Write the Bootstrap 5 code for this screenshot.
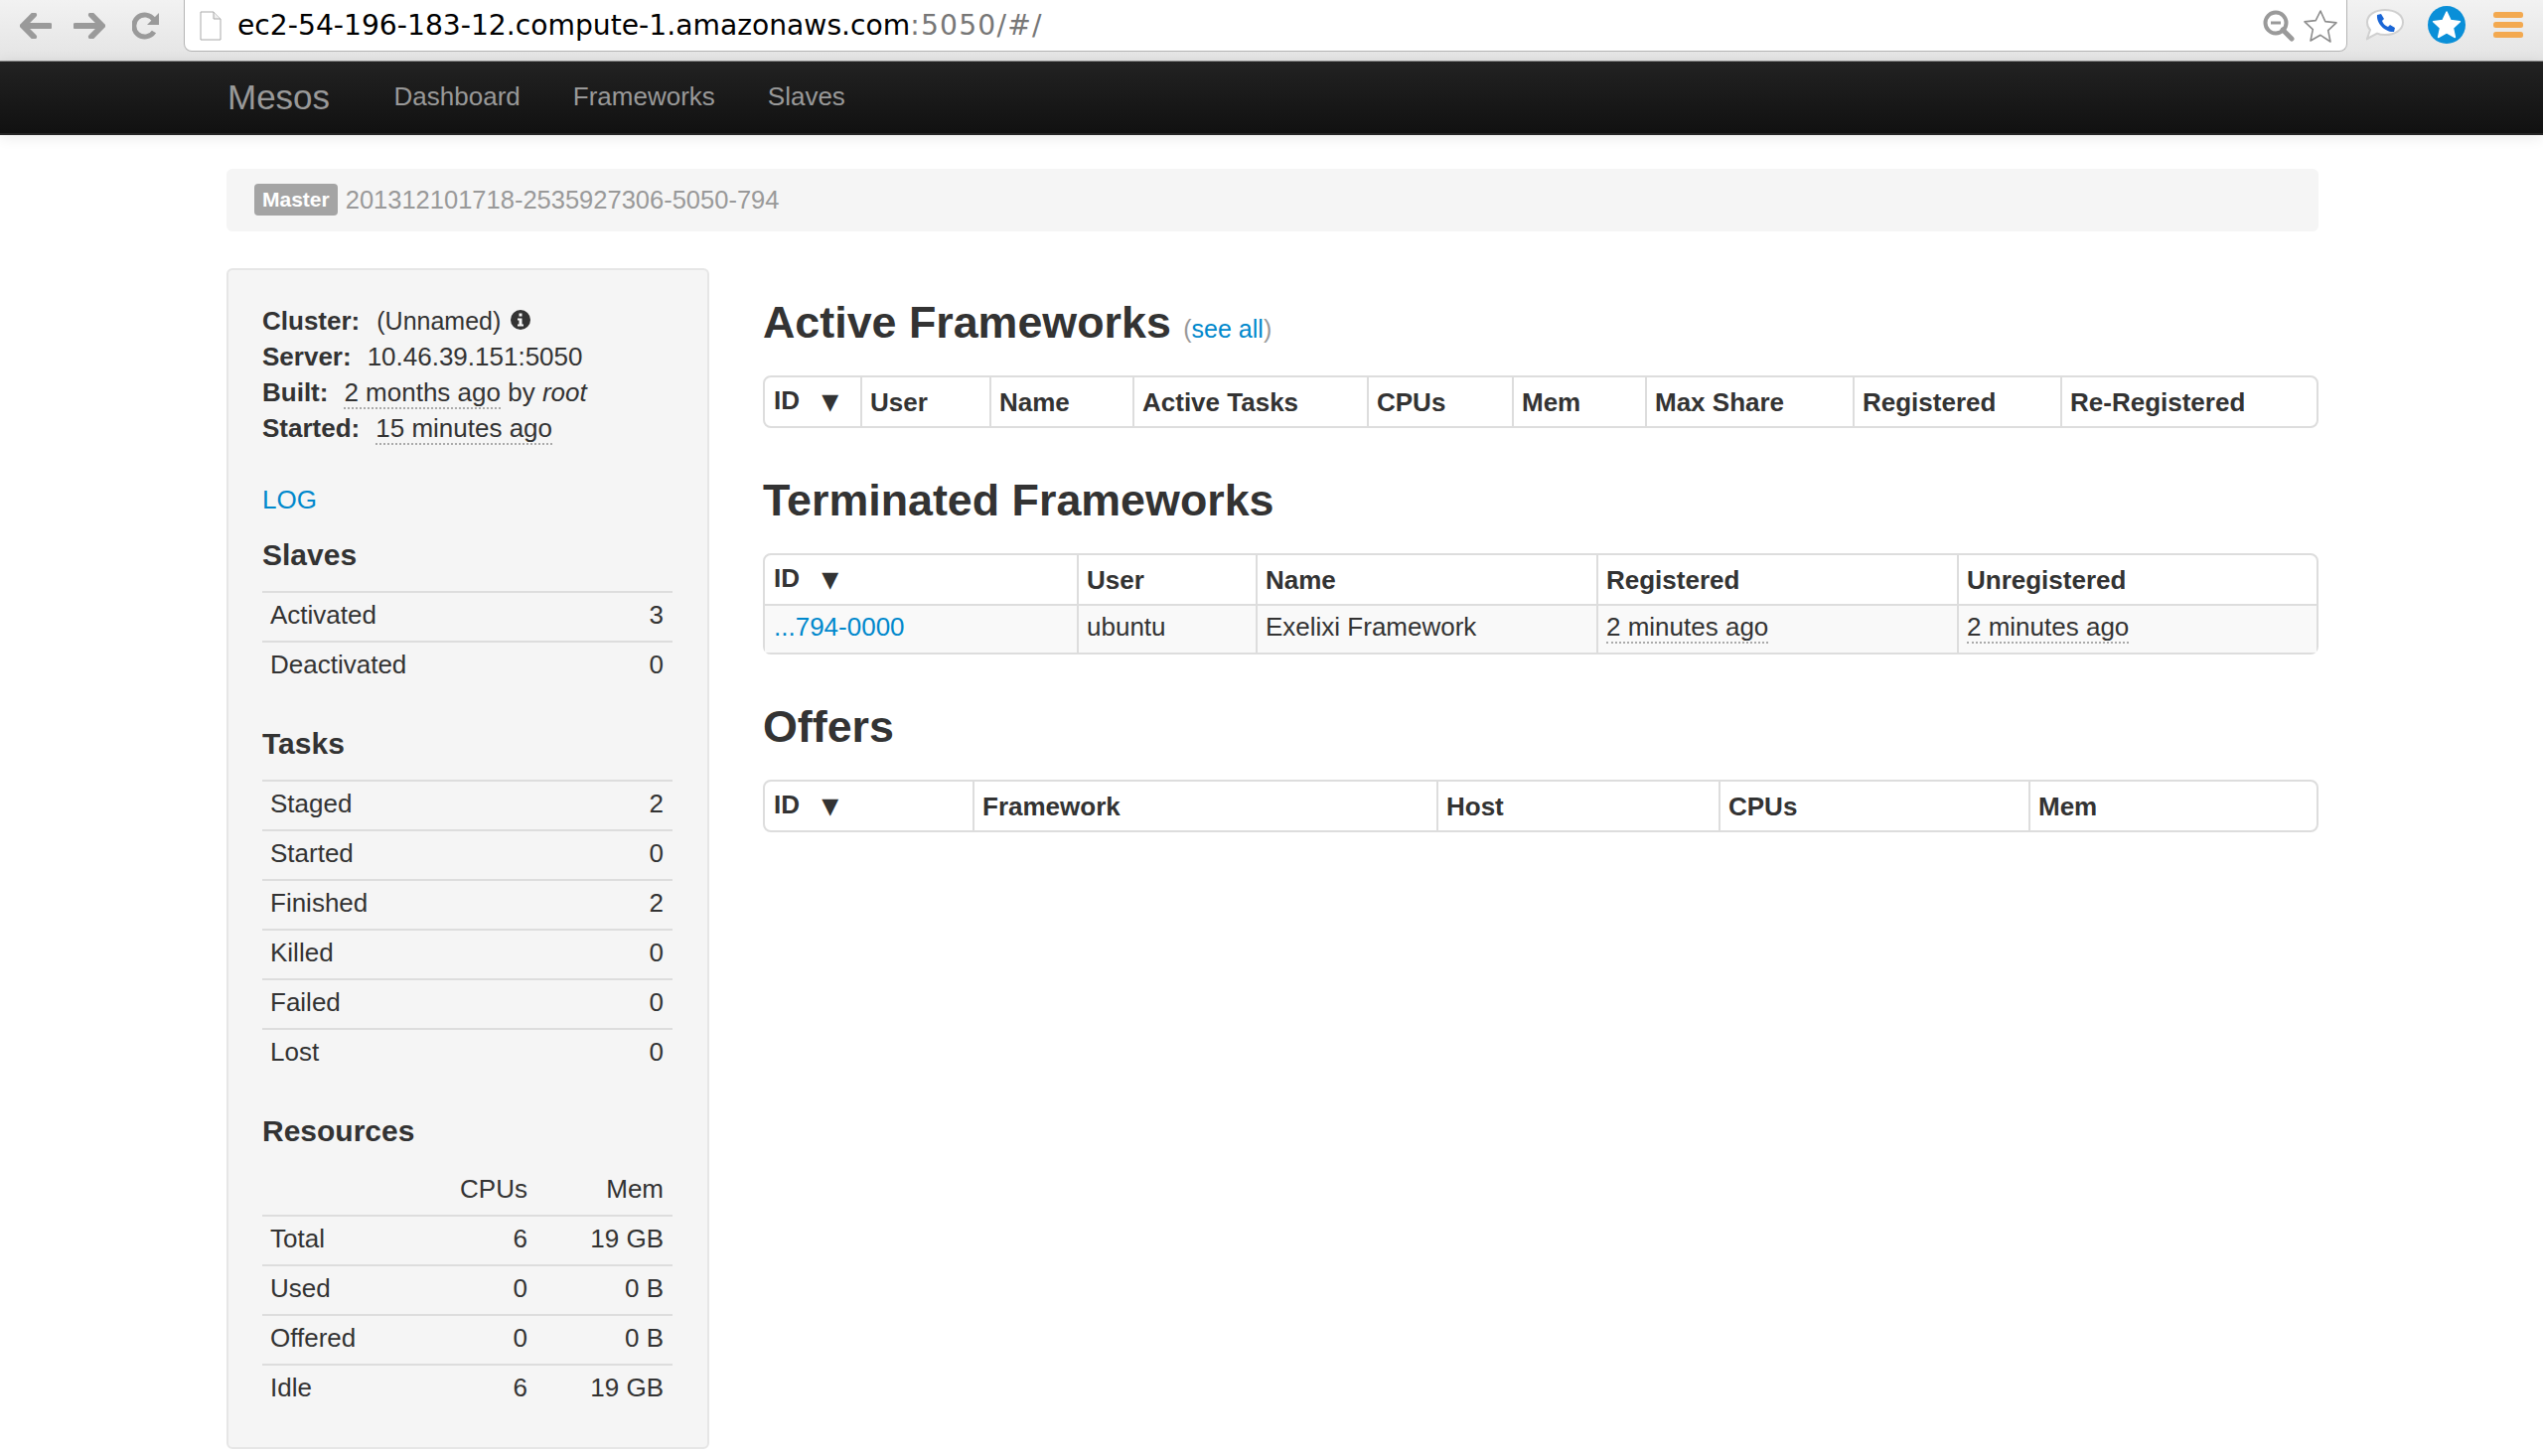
<!DOCTYPE html>
<html lang="en">
<head>
  <meta charset="UTF-8">
  <meta name="viewport" content="width=device-width, initial-scale=1">
  <title>Mesos</title>
  <link href="https://cdn.jsdelivr.net/npm/bootstrap@5.3.3/dist/css/bootstrap.min.css" rel="stylesheet">
  <style>
    html, body { height: 1466px; overflow: hidden; }
    body { font-family: "Liberation Sans", Arial, sans-serif; font-size: 26px; line-height: 36px; color: #333; background: #fff; }
    a { color: #0088cc; text-decoration: none; }

    /* browser chrome */
    .browser-bar { height: 62px; padding: 12px 0 0 20px; background: linear-gradient(#f2f2f2, #e4e4e4); border-bottom: 1px solid #8f8f8f; }
    .nav-arrows { width: 165px; gap: 22px; }
    .nav-arrows svg:last-child { margin-left: 5px; }
    .address-box { width: 2178px; height: 52px; margin-top: -12px; padding: 0 8px 0 15px; background: #fff; border: 1px solid #b4b4b4; border-top: 0; border-radius: 0 0 8px 8px; }
    .url-text { margin-left: 16px; font-family: "DejaVu Sans", sans-serif; font-size: 28.2px; line-height: 52px; color: #000; white-space: nowrap; }
    .url-text span { color: #777; letter-spacing: 1.2px; }
    .ext-icons { margin: -6px 0 0 19px; gap: 24px; }
    .ext-icons svg:last-child { margin-left: 4px; }

    /* dark bar */
    .top-bar { height: 74px; padding: 0 0 0 229px; background: linear-gradient(#222, #111); border-bottom: 2px solid #252525; box-shadow: 0 2px 14px rgba(0,0,0,.09); }
    .top-bar .navbar-brand { margin: 0 38px 0 0; padding: 0; font-size: 35px; font-weight: 400; line-height: 72px; color: #999; }
    .top-bar .navbar-nav { margin-top: -2px; }
    .top-bar .nav-link { padding: 0 26.5px; font-size: 26px; line-height: 69px; color: #999; }

    .page-wrap { padding: 34px 226px 0 228px; }
    .crumb-well { height: 63px; margin-bottom: 37px; padding: 0 28px 2px; background: #f5f5f5; border-radius: 6px; font-size: 25.5px; color: #999; }
    .crumb-tag { margin-right: 8px; padding: 0 8px; height: 32px; line-height: 32px; background: #a4a4a4; color: #fff; font-size: 21px; font-weight: 700; border-radius: 4px; }

    .side-well { width: 486px; height: 1189px; margin-right: 54px; padding: 33px 35px 0 34px; flex: none; background: #f5f5f5; border: 2px solid #e6e6e6; border-radius: 6px; }
    .info-line strong { margin-right: 16px; }
    .cluster-name { font-size: 25px; margin-left: 1px; margin-right: 2px; }
    .dotted { border-bottom: 2px dotted #aaa; }
    .log-link { margin: 36px 0 20px; }
    .side-title { margin: 0 0 18px; font-size: 30px; font-weight: 700; line-height: 36px; color: #333; }

    .stat-table { width: 100%; margin-bottom: 36px; table-layout: fixed; background: transparent; --bs-table-bg: transparent; --bs-table-color: #333; }
    .stat-table.table > :not(caption) > * > * { padding: 5px 9px 9px 8px; line-height: 34px; border-top: 2px solid #ddd; border-bottom: 0; font-weight: 400; }
    .stat-table.table > thead > tr > * { border-top: 0; }

    .main-col { min-width: 0; padding-top: 18px; }
    .main-title { margin: 0 0 18px; font-size: 44.8px; font-weight: 700; line-height: 72px; color: #333; }
    .main-title small { font-size: 25px; font-weight: 400; line-height: 1; color: #999; }
    .fw-table { margin-bottom: 36px; table-layout: fixed; border-collapse: separate; border-spacing: 0; border: 2px solid #ddd; border-radius: 8px; --bs-table-bg: transparent; --bs-table-color: #333; }
    .fw-table.table > :not(caption) > * > * { padding: 6px 8px 7px; line-height: 34px; border-width: 0 0 0 2px; border-style: solid; border-color: #ddd; white-space: nowrap; }
    .fw-table.table > :not(caption) > * > *:first-child { border-left: 0; padding-left: 9px; }
    .fw-table.table > tbody > tr > * { padding-top: 4px; padding-bottom: 9px; border-top: 2px solid #ddd; background: #f9f9f9; }
    .sort-arrow { margin-left: 15px; font-size: 22px; font-family: "DejaVu Sans", sans-serif; }
  </style>
</head>
<body>
  <!-- browser toolbar -->
  <div class="browser-bar d-flex align-items-start">
    <div class="nav-arrows d-flex align-items-center">
      <svg width="32" height="26" viewBox="0 0 32 26"><path d="M14 2 3 13l11 11M4 13h26" fill="none" stroke="#9a9a9a" stroke-width="6" stroke-linecap="round" stroke-linejoin="round"/></svg>
      <svg width="32" height="26" viewBox="0 0 32 26"><path d="M18 2l11 11-11 11M28 13H2" fill="none" stroke="#9a9a9a" stroke-width="6" stroke-linecap="round" stroke-linejoin="round"/></svg>
      <svg width="28" height="28" viewBox="0 0 28 28"><path d="M22 20a11 11 0 1 1 0-12" fill="none" stroke="#9a9a9a" stroke-width="5"/><path d="M27 1v12H15z" fill="#9a9a9a"/></svg>
    </div>
    <div class="address-box d-flex align-items-center">
      <svg width="22" height="30" viewBox="0 0 22 30"><path d="M1 1h13l7 7v21H1z" fill="#fff" stroke="#a8a8a8"/><path d="M14 1v7h7" fill="#eee" stroke="#a8a8a8"/></svg>
      <div class="url-text flex-grow-1">ec2-54-196-183-12.compute-1.amazonaws.com<span>:5050/#/</span></div>
      <svg class="me-2" width="32" height="32" viewBox="0 0 32 32"><circle cx="13" cy="13" r="10.5" fill="none" stroke="#9a9a9a" stroke-width="4"/><path d="M20 20l9 9" stroke="#9a9a9a" stroke-width="5" stroke-linecap="round"/><path d="M8 13h10" stroke="#9a9a9a" stroke-width="3"/></svg>
      <svg width="36" height="34" viewBox="0 0 36 34"><path d="M18 2l4.8 10.6 11.2 1.3-8.3 7.8 2.3 11.3L18 26.3 8 32l2.3-11.3L2 12.9l11.2-1.3z" fill="#fff" stroke="#8d8d8d" stroke-width="1.6" stroke-linejoin="round"/></svg>
    </div>
    <div class="ext-icons d-flex align-items-center">
      <svg width="38" height="32" viewBox="0 0 38 32"><path d="M19 1c10 0 18 5 18 12.500S29 26 19 26c-3 0-6-.4-8-1.400L1 30l3-9C2 19 1 16 1 13.500 1 6 9 1 19 1z" fill="#fff" stroke="#d0d0d0" stroke-width="2"/><path d="M11 6l4-1 3 5-2 2c1 3 3 5 6 6l2-2 5 3-1 4c-8 1-18-8-17-17z" fill="#1a66d6"/></svg>
      <svg width="38" height="38" viewBox="0 0 38 38"><circle cx="19" cy="19" r="19" fill="#0a8fd8"/><path d="M19 6l4 8.600 9.400 1.100-7 6.500 2 9.300-8.400-4.700-8.400 4.700 2-9.300-7-6.500 9.400-1.100z" fill="#fff" stroke="#fff" stroke-width="1.500" stroke-linejoin="round"/></svg>
      <svg width="30" height="26" viewBox="0 0 30 26"><rect width="30" height="6" y="0" rx="2.500" fill="#f3a950"/><rect width="30" height="6" y="10" rx="2.500" fill="#f3a950"/><rect width="30" height="6" y="20" rx="2.500" fill="#f3a950"/></svg>
    </div>
  </div>

  <!-- Navbar -->
  <nav class="navbar top-bar justify-content-start flex-nowrap">
    <a class="navbar-brand" href="#">Mesos</a>
    <ul class="navbar-nav flex-row">
      <li class="nav-item"><a class="nav-link" href="#">Dashboard</a></li>
      <li class="nav-item"><a class="nav-link" href="#">Frameworks</a></li>
      <li class="nav-item"><a class="nav-link" href="#">Slaves</a></li>
    </ul>
  </nav>

  <div class="page-wrap">
    <div class="crumb-well d-flex align-items-center">
      <span class="crumb-tag">Master</span>201312101718-2535927306-5050-794
    </div>

    <div class="d-flex">
      <!-- Sidebar -->
      <div class="side-well">
        <div class="info-line"><strong>Cluster:</strong><span class="cluster-name">(Unnamed)</span>
          <svg class="align-baseline" width="20" height="20" viewBox="0 0 20 20"><circle cx="10" cy="10" r="10" fill="#333"/><path d="M8.500 3.500h3v3h-3zM7 8.500h4.500v6H13v2H7v-2h1.500v-4H7z" fill="#f5f5f5"/></svg>
        </div>
        <div class="info-line"><strong>Server:</strong>10.46.39.151:5050</div>
        <div class="info-line"><strong>Built:</strong><span class="dotted">2 months ago</span> by <em>root</em></div>
        <div class="info-line"><strong>Started:</strong><span class="dotted">15 minutes ago</span></div>
        <div class="log-link"><a href="#">LOG</a></div>

        <h4 class="side-title">Slaves</h4>
        <table class="table stat-table">
          <tbody>
            <tr><td>Activated</td><td class="text-end">3</td></tr>
            <tr><td>Deactivated</td><td class="text-end">0</td></tr>
          </tbody>
        </table>

        <h4 class="side-title">Tasks</h4>
        <table class="table stat-table">
          <tbody>
            <tr><td>Staged</td><td class="text-end">2</td></tr>
            <tr><td>Started</td><td class="text-end">0</td></tr>
            <tr><td>Finished</td><td class="text-end">2</td></tr>
            <tr><td>Killed</td><td class="text-end">0</td></tr>
            <tr><td>Failed</td><td class="text-end">0</td></tr>
            <tr><td>Lost</td><td class="text-end">0</td></tr>
          </tbody>
        </table>

        <h4 class="side-title">Resources</h4>
        <table class="table stat-table mb-0">
          <colgroup><col width="136"><col width="140"><col></colgroup>
          <thead>
            <tr><th></th><th class="text-end">CPUs</th><th class="text-end">Mem</th></tr>
          </thead>
          <tbody>
            <tr><td>Total</td><td class="text-end">6</td><td class="text-end">19 GB</td></tr>
            <tr><td>Used</td><td class="text-end">0</td><td class="text-end">0 B</td></tr>
            <tr><td>Offered</td><td class="text-end">0</td><td class="text-end">0 B</td></tr>
            <tr><td>Idle</td><td class="text-end">6</td><td class="text-end">19 GB</td></tr>
          </tbody>
        </table>
      </div>

      <!-- Tables -->
      <div class="main-col flex-grow-1">
        <h3 class="main-title">Active Frameworks <small>(<a href="#">see all</a>)</small></h3>
        <table class="table fw-table">
          <colgroup><col width="96"><col width="130"><col width="144"><col width="236"><col width="146"><col width="134"><col width="209"><col width="209"><col></colgroup>
          <thead>
            <tr><th>ID <span class="sort-arrow">▼</span></th><th>User</th><th>Name</th><th>Active Tasks</th><th>CPUs</th><th>Mem</th><th>Max Share</th><th>Registered</th><th>Re-Registered</th></tr>
          </thead>
        </table>

        <h3 class="main-title">Terminated Frameworks</h3>
        <table class="table fw-table">
          <colgroup><col width="314"><col width="180"><col width="343"><col width="363"><col></colgroup>
          <thead>
            <tr><th>ID <span class="sort-arrow">▼</span></th><th>User</th><th>Name</th><th>Registered</th><th>Unregistered</th></tr>
          </thead>
          <tbody>
            <tr><td><a href="#">...794-0000</a></td><td>ubuntu</td><td>Exelixi Framework</td><td><span class="dotted">2 minutes ago</span></td><td><span class="dotted">2 minutes ago</span></td></tr>
          </tbody>
        </table>

        <h3 class="main-title">Offers</h3>
        <table class="table fw-table">
          <colgroup><col width="209"><col width="467"><col width="284"><col width="312"><col></colgroup>
          <thead>
            <tr><th>ID <span class="sort-arrow">▼</span></th><th>Framework</th><th>Host</th><th>CPUs</th><th>Mem</th></tr>
          </thead>
        </table>
      </div>
    </div>
  </div>
  <script src="https://cdn.jsdelivr.net/npm/bootstrap@5.3.3/dist/js/bootstrap.bundle.min.js"></script>
</body>
</html>
